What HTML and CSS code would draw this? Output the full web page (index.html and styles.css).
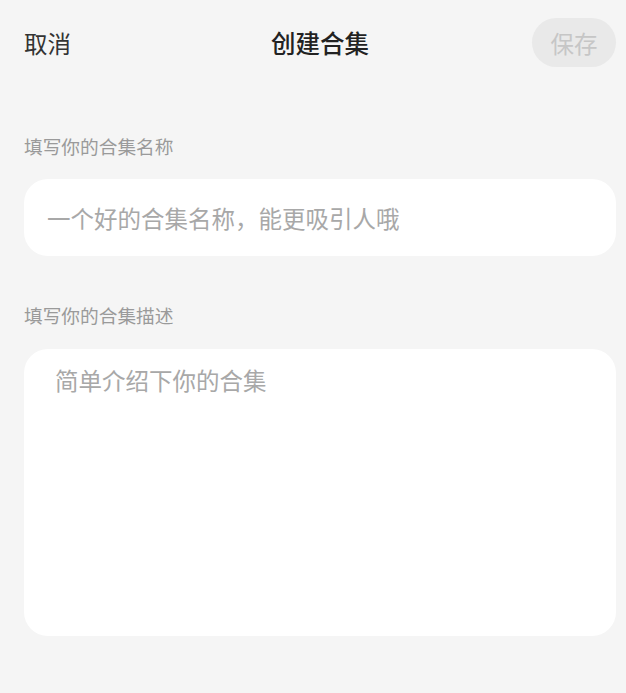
FILE: index.html
```html
<!DOCTYPE html>
<html lang="zh-CN">
<head>
<meta charset="utf-8">
<title>创建合集</title>
<link rel="stylesheet" href="styles.css">
</head>
<body>
<div class="page">
  <header class="topbar">
    <div class="cancel">取消</div>
    <div class="title">创建合集</div>
    <div class="save-wrap"><div class="save">保存</div></div>
  </header>
  <section class="field field-name">
    <div class="label">填写你的合集名称</div>
    <div class="input"><span class="placeholder">一个好的合集名称，能更吸引人哦</span></div>
  </section>
  <section class="field field-desc">
    <div class="label">填写你的合集描述</div>
    <div class="textarea"><span class="placeholder">简单介绍下你的合集</span></div>
  </section>
</div>
</body>
</html>
```
FILE: styles.css
```css
html, body {
  margin: 0;
  padding: 0;
  background: #f5f5f5;
}
body {
  font-family: "Noto Sans CJK SC", "Noto Sans", sans-serif;
  color: #333;
}
.page {
  padding: 18px 10px 0 24px;
  display: flex;
  flex-direction: column;
}
.topbar {
  display: grid;
  grid-template-columns: 1fr auto 1fr;
  align-items: center;
  height: 49px;
}
.cancel {
  font-size: 23.5px;
  color: #333;
  line-height: 32px;
}
.title {
  font-size: 24.5px;
  font-weight: 500;
  color: #222;
  line-height: 32px;
}
.save-wrap {
  display: flex;
  justify-content: flex-end;
}
.save {
  width: 84px;
  height: 49px;
  border-radius: 25px;
  background: #e9e9e9;
  color: #c6c6c6;
  font-size: 23.5px;
  display: flex;
  align-items: center;
  justify-content: center;
}
.field {
  display: flex;
  flex-direction: column;
}
.field-name {
  margin-top: 66px;
}
.field-desc {
  margin-top: 46px;
}
.label {
  font-size: 18.7px;
  line-height: 26px;
  color: #9a9a9a;
  margin-bottom: 20px;
}
.field-desc .label {
  margin-bottom: 21px;
}
.input {
  height: 77px;
  background: #fff;
  border-radius: 24px;
  display: flex;
  align-items: center;
  padding-left: 23px;
}
.textarea {
  height: 287px;
  background: #fff;
  border-radius: 24px;
  padding: 15px 0 0 31px;
  box-sizing: border-box;
}
.placeholder {
  font-size: 23.5px;
  line-height: 32px;
  color: #a8a8a8;
}
```
